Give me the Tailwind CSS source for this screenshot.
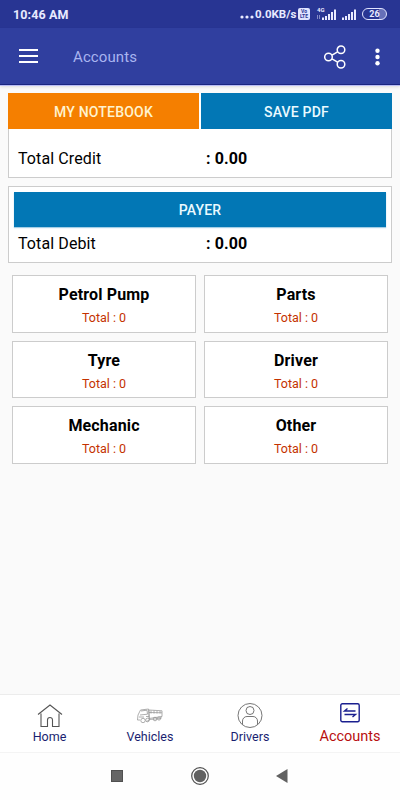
<!DOCTYPE html>
<html lang="en">
<head>
  <meta charset="UTF-8" />
  <meta name="viewport" content="width=device-width, initial-scale=1.0" />
  <title>Accounts</title>
  <script src="https://cdn.jsdelivr.net/npm/@tailwindcss/browser@4"></script>
</head>
<body class="flex flex-col h-screen overflow-hidden bg-[#fafafa] font-['Roboto',sans-serif] text-black">

  <!-- Status bar -->
  <div class="h-7 shrink-0 bg-[#283593] flex items-center pt-px pl-[13px] pr-[13px] text-[#e8eaff]">
    <span class="pt-px text-[12.5px] font-bold leading-none tracking-[0.1px]">10:46 AM</span>
    <div class="ml-auto flex items-center">
      <svg class="w-[14px] h-[4px] mt-[5px] mr-px" viewBox="0 0 14 4" fill="currentColor">
        <circle cx="2" cy="2" r="1.6" /><circle cx="7" cy="2" r="1.6" /><circle cx="12" cy="2" r="1.6" />
      </svg>
      <span class="w-[43px] text-[11.5px] font-bold leading-none whitespace-nowrap">0.0KB/s</span>
      <span class="w-[12px] h-[12px] -mt-px rounded-[2px] bg-[#e0e4ff] text-[#283593] text-[5px] leading-[5px] pt-px font-bold text-center">Vo<br>LTE</span>
      <svg class="ml-[6px] -mt-[2px] w-[21px] h-[14px]" viewBox="0 0 21 14" fill="currentColor">
        <text x="1" y="5" font-size="6" font-weight="700">4G</text>
        <path d="M1 8h.8v4H1zM3 8h.8v4H3z" opacity=".6" />
        <path d="M6 10.500h2V13H6zM9 9h2v4H9zM12 7h2v6h-2zM15 5h2v8h-2zM18 2.500h2V13h-2z" />
      </svg>
      <svg class="ml-[4px] -mt-[2px] w-[16px] h-[14px]" viewBox="0 0 16 14" fill="currentColor">
        <path d="M1 10.500h2V13H1zM4 9h2v4H4zM7 7h2v6H7zM10 5h2v8h-2zM13 2.500h2V13h-2z" />
      </svg>
      <span class="ml-[5px] -mt-px w-[25px] h-[12px] rounded-full border border-[#e0e4ff] bg-linear-to-r from-transparent from-70% to-[#6670b8] to-70% text-[9px] leading-[10px] font-bold text-center">26</span>
    </div>
  </div>

  <!-- App bar -->
  <header class="h-[57px] shrink-0 bg-[#303f9f] border-b border-[#1a2580] shadow-[0_1px_0_#b9bdf5,0_2px_3px_rgba(0,0,0,0.12)] flex items-center pl-[19px] pr-[20px] text-white">
    <svg class="w-[19px] h-[14px]" viewBox="0 0 19 14" fill="currentColor">
      <path d="M0 0h19v2H0zM0 6h19v2H0zM0 12h19v2H0z" />
    </svg>
    <h1 class="ml-[35px] pt-[3px] text-[15px] tracking-[0.1px] text-[#a9b4f0]">Accounts</h1>
    <svg class="ml-auto mt-px w-[22px] h-[24px]" viewBox="0 0 22 24" fill="none" stroke="currentColor" stroke-width="1.5">
      <circle cx="4.500" cy="12" r="3.800" />
      <circle cx="17" cy="4.800" r="3.800" />
      <circle cx="17" cy="19.200" r="3.800" />
      <path d="M8 10.200l5.600-3.400M8 13.800l5.600 3.400" />
    </svg>
    <svg class="ml-[29px] mt-px w-[5px] h-[18px]" viewBox="0 0 5 18" fill="currentColor">
      <circle cx="2.500" cy="2.800" r="2.200" /><circle cx="2.500" cy="9" r="2.200" /><circle cx="2.500" cy="15.200" r="2.200" />
    </svg>
  </header>

  <!-- Content -->
  <main class="flex-1 px-2 pt-2">
    <section class="h-[85px] bg-white border border-t-0 border-[#cccccc]">
      <div class="-mx-px h-9 grid grid-cols-2 gap-[2px] text-center text-[14px] leading-[34px] tracking-[0.2px] font-medium">
        <button class="pt-[2px] bg-[#f57f00] text-[#fff3cf]">MY NOTEBOOK</button>
        <button class="pt-[2px] bg-[#0277b5] text-[#eafaff]">SAVE PDF</button>
      </div>
      <div class="mt-5 pl-[9px] flex text-[16px] leading-5 tracking-[0.1px]">
        <span class="w-[188px]">Total Credit</span>
        <span class="font-bold">: 0.00</span>
      </div>
    </section>

    <section class="mt-2 h-[77px] bg-white border border-[#cccccc] px-[5px] pt-[4.5px]">
      <button class="block w-full h-[35px] pt-[3px] bg-[#0277b5] text-[#eafaff] text-[14px] tracking-[0.2px] font-medium shadow-[0_1px_1px_#a5cfe6]">PAYER</button>
      <div class="mt-[7px] pl-1 flex text-[16px] leading-5 tracking-[0.1px]">
        <span class="w-[188px]">Total Debit</span>
        <span class="font-bold">: 0.00</span>
      </div>
    </section>

    <div class="mt-3 px-1 grid grid-cols-2 gap-x-2 gap-y-[8px] text-center">
      <div class="h-[57.5px] bg-white border border-[#cccccc] pt-[9px]">
        <h2 class="text-[16px] leading-5 tracking-[0.15px] font-bold">Petrol Pump</h2>
        <p class="mt-[5px] text-[12.5px] leading-4 text-[#c43200]">Total : 0</p>
      </div>
      <div class="h-[57.5px] bg-white border border-[#cccccc] pt-[9px]">
        <h2 class="text-[16px] leading-5 tracking-[0.15px] font-bold">Parts</h2>
        <p class="mt-[5px] text-[12.5px] leading-4 text-[#c43200]">Total : 0</p>
      </div>
      <div class="h-[57.5px] bg-white border border-[#cccccc] pt-[9px]">
        <h2 class="text-[16px] leading-5 tracking-[0.15px] font-bold">Tyre</h2>
        <p class="mt-[5px] text-[12.5px] leading-4 text-[#c43200]">Total : 0</p>
      </div>
      <div class="h-[57.5px] bg-white border border-[#cccccc] pt-[9px]">
        <h2 class="text-[16px] leading-5 tracking-[0.15px] font-bold">Driver</h2>
        <p class="mt-[5px] text-[12.5px] leading-4 text-[#c43200]">Total : 0</p>
      </div>
      <div class="h-[57.5px] bg-white border border-[#cccccc] pt-[9px]">
        <h2 class="text-[16px] leading-5 tracking-[0.15px] font-bold">Mechanic</h2>
        <p class="mt-[5px] text-[12.5px] leading-4 text-[#c43200]">Total : 0</p>
      </div>
      <div class="h-[57.5px] bg-white border border-[#cccccc] pt-[9px]">
        <h2 class="text-[16px] leading-5 tracking-[0.15px] font-bold">Other</h2>
        <p class="mt-[5px] text-[12.5px] leading-4 text-[#c43200]">Total : 0</p>
      </div>
    </div>
  </main>

  <!-- Bottom navigation -->
  <nav class="h-[58px] shrink-0 bg-white border-t border-[#ececec] grid grid-cols-4 text-[12.5px] leading-4 text-[#1a1f71]">
    <a class="flex flex-col items-center pt-2">
      <svg class="w-[26px] h-[26px]" viewBox="0 0 26 26" fill="none" stroke="#555" stroke-width="1.1">
        <path d="M1 11.500L13 2l12 9.500M4 10.500V23.500h6.500V17a2.500 2.500 0 015 0v6.500H22V10.500" />
      </svg>
      <span class="-ml-px">Home</span>
    </a>
    <a class="flex flex-col items-center pt-2">
      <svg class="w-[26px] h-[26px]" viewBox="0 0 26 26" fill="none" stroke="#999" stroke-width=".8">
        <path d="M1 12l2.500-5 8-1 1 11-3 1.500M1 12l-.5 5H3M4 8l6-.8.5 4-7.500.8M2 14h5M9 13.500h3M12 7l13 .8v5.700l-13 2zM12 9.500l13 .3M14 7.500v3M17 7.500v3M20 8v2.500M23 8v2.500M12 16.500l12-1v-2" />
        <circle cx="6" cy="17.500" r="2.200" /><circle cx="10.500" cy="17" r="1.800" /><circle cx="18" cy="16" r="1.800" /><circle cx="22" cy="15.500" r="1.600" />
      </svg>
      <span>Vehicles</span>
    </a>
    <a class="flex flex-col items-center pt-2">
      <svg class="w-[26px] h-[26px]" viewBox="0 0 26 26" fill="none" stroke="#666" stroke-width=".9">
        <circle cx="13" cy="12.500" r="12" />
        <circle cx="13" cy="7.500" r="4" />
        <path d="M5.500 21.500V18a4.500 4.500 0 014.500-4.500h6a4.500 4.500 0 014.500 4.500v3.500" />
      </svg>
      <span>Drivers</span>
    </a>
    <a class="flex flex-col items-center pt-2 text-[14.5px] text-[#b80f0f]">
      <svg class="w-[20px] h-[20px]" viewBox="0 0 20 20" fill="none" stroke="#1a1f8f" stroke-width="1.4">
        <rect x=".8" y=".8" width="18.400" height="18" rx="1.500" />
        <path d="M15.500 8H4.500L7.500 5.500M4.500 11.500h11L12.500 14" />
      </svg>
      <span class="mt-[6px]">Accounts</span>
    </a>
  </nav>

  <!-- System navigation -->
  <div class="h-12 shrink-0 bg-[#fefefe] border-t border-[#f4f4f4] flex items-center pb-[2px] pl-[111px] text-[#616161]">
    <span class="w-3 h-3 bg-[#666666] border border-[#505050]"></span>
    <svg class="ml-[68px] w-[18px] h-[18px]" viewBox="0 0 18 18">
      <circle cx="9" cy="9" r="8.300" fill="none" stroke="#505050" stroke-width="1.200" />
      <circle cx="9" cy="9" r="6.200" fill="#616161" />
    </svg>
    <svg class="ml-[67px] w-[12px] h-[14px]" viewBox="0 0 12 14" fill="currentColor">
      <path d="M0 7L11.500 0v14z" />
    </svg>
  </div>

</body>
</html>
